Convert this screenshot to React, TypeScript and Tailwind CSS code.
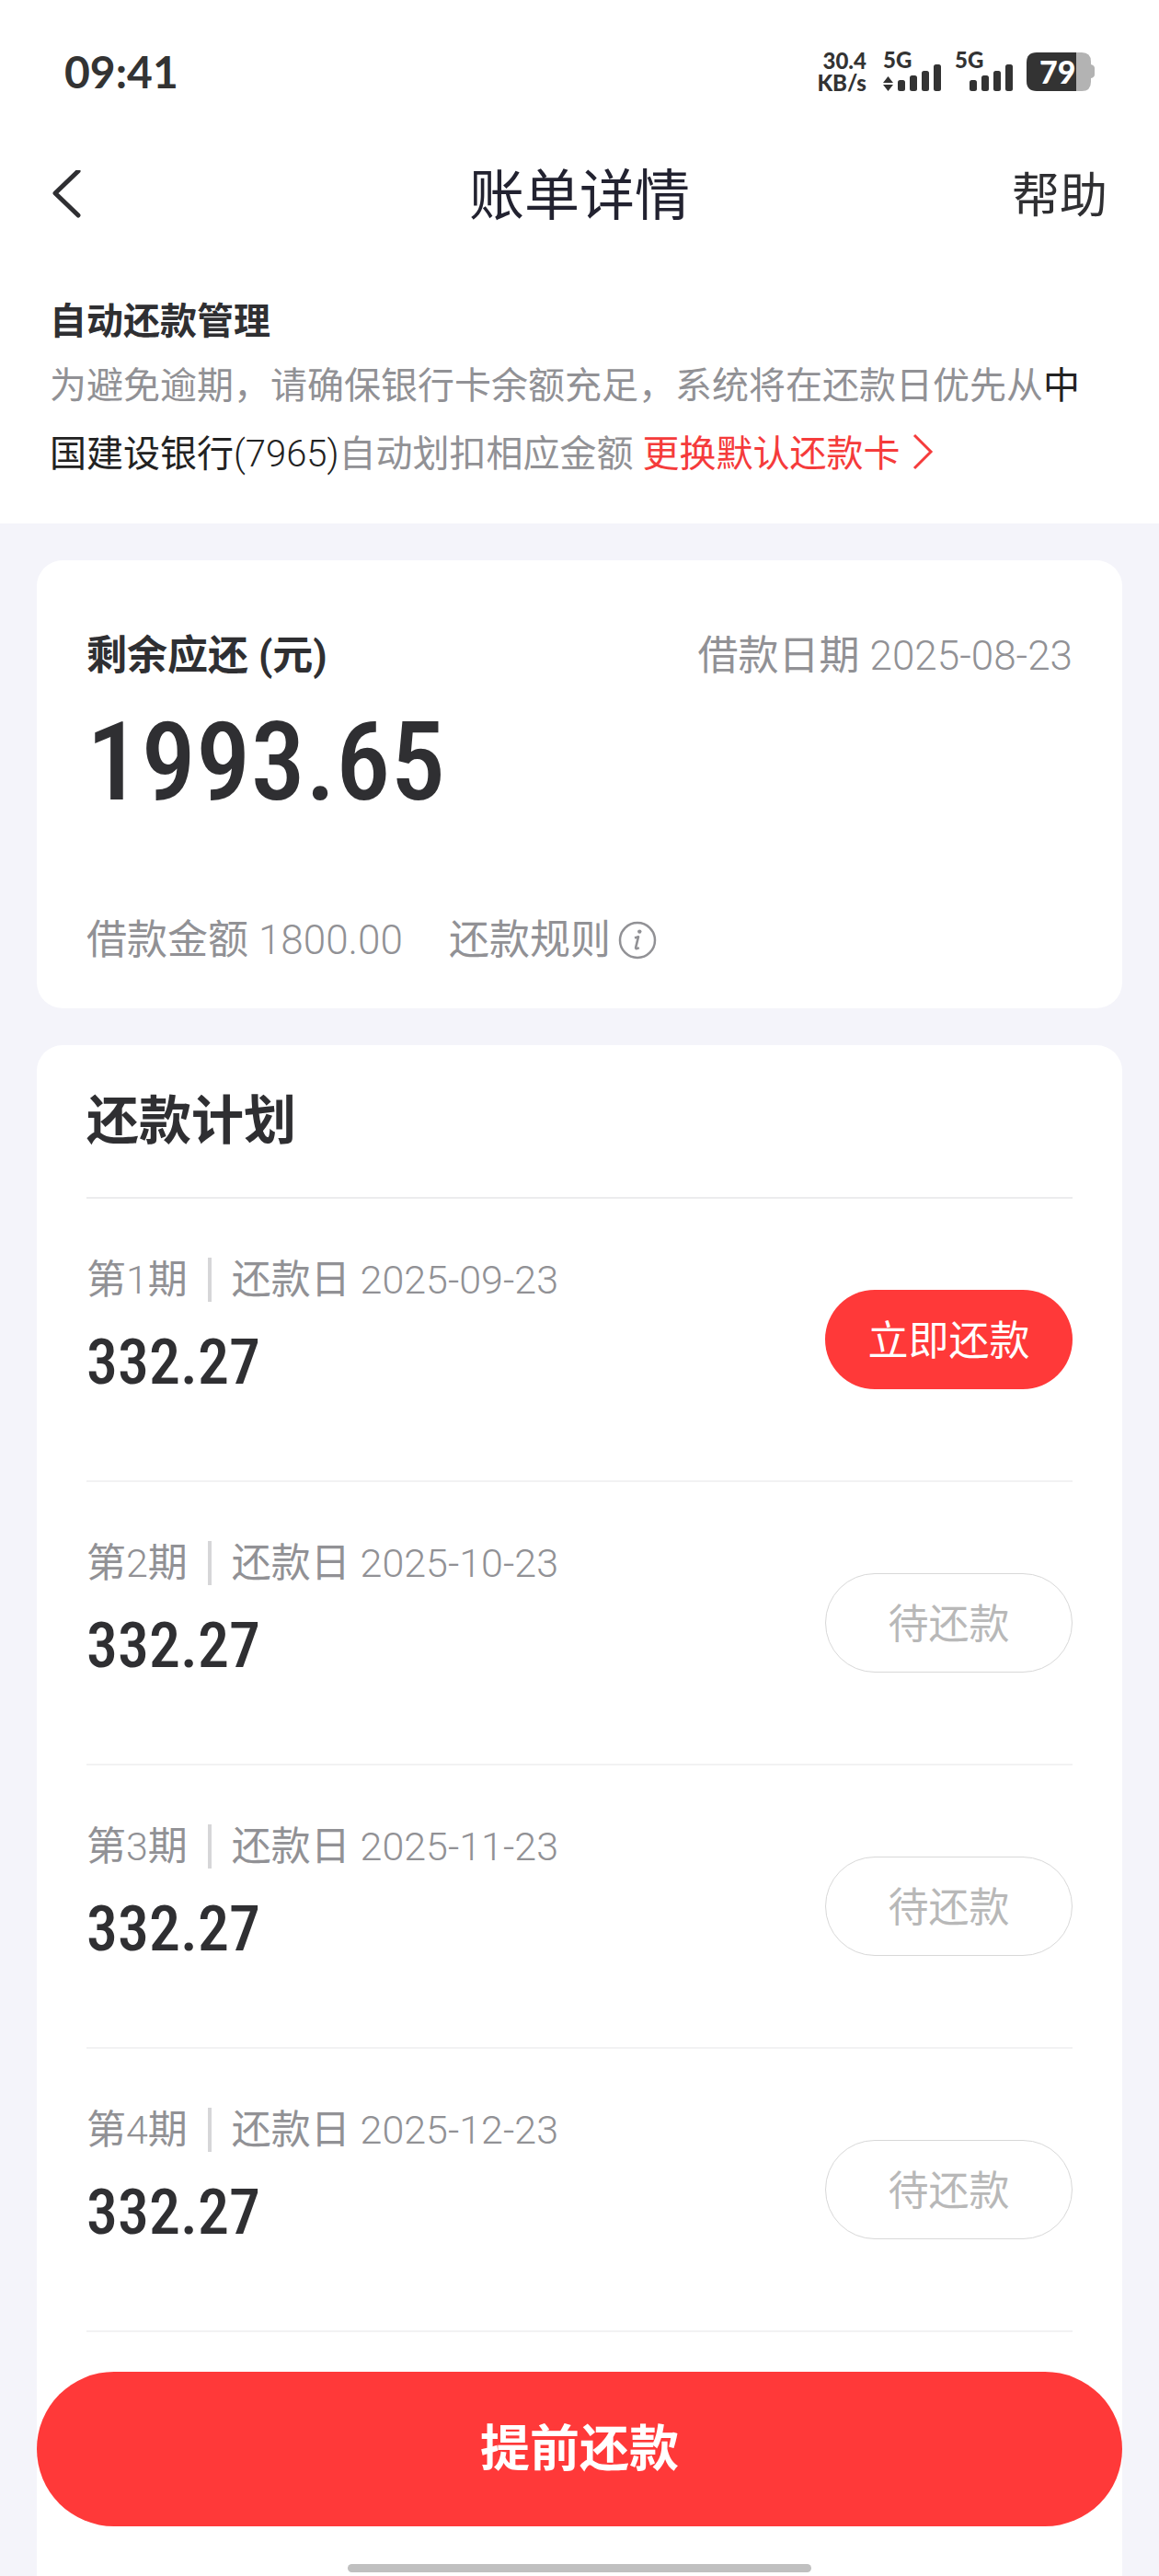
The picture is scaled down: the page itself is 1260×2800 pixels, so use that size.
import React from 'react';

interface Installment {
    period: number;
    date: string;
    amount: string;
    due: boolean;
}

const installments: Installment[] = [
    { period: 1, date: '2025-09-23', amount: '332.27', due: true },
    { period: 2, date: '2025-10-23', amount: '332.27', due: false },
    { period: 3, date: '2025-11-23', amount: '332.27', due: false },
    { period: 4, date: '2025-12-23', amount: '332.27', due: false }
];

const Signal: React.FC<{ arrows?: boolean }> = ({ arrows = false }) => (
    <div className="relative h-[42px] w-16">
        <span className="absolute left-0 top-0 text-2xl leading-4 font-black">5G</span>
        <svg className="block" width="64" height="42" viewBox="0 0 64 42" fill="currentColor" aria-hidden="true">
            {arrows && <path d="M5.5 26l5.5 7H0zM5.5 42L0 35h11z" />}
            <rect x="16" y="30" width="8" height="12" rx="2.5" />
            <rect x="29" y="25" width="8" height="17" rx="2.5" />
            <rect x="42" y="20" width="8" height="22" rx="2.5" />
            <rect x="55" y="13" width="8" height="29" rx="2.5" />
        </svg>
    </div>
);

const Battery: React.FC = () => (
    <div className="relative h-[42px] w-[74px]">
        <svg className="block" width="74" height="42" viewBox="0 0 74 42" aria-hidden="true">
            <path d="M54 0h6q10 0 10 10v3q4 1 4 4v7q0 3-4 4v4q0 10-10 10h-6z" fill="#b3b3b3" />
            <path d="M11 0h43v42H11Q0 42 0 31V11Q0 0 11 0z" fill="#333333" />
        </svg>
        <span className="absolute left-3.5 top-0 text-[34px] leading-[42px] font-black text-white">79</span>
    </div>
);

const StatusBar: React.FC = () => (
    <div className="flex h-[156px] items-center justify-between px-[70px] font-['Lato',sans-serif] text-[#333333]">
        <span className="text-5xl font-bold">09:41</span>
        <div className="flex items-center gap-[14px]">
            <p className="mr-1 text-right text-2xl leading-6 font-black">
                30.4
                <br />
                KB/s
            </p>
            <Signal arrows />
            <Signal />
            <Battery />
        </div>
    </div>
);

const InfoIcon: React.FC = () => (
    <svg width="42" height="42" viewBox="0 0 42 42" fill="none" stroke="currentColor" aria-hidden="true">
        <circle cx="21" cy="21" r="19" strokeWidth="2.5" />
        <path d="M18 18.5l4-1.2-2.8 11.5q-.5 2.6 3.6.4" strokeWidth="2.6" strokeLinejoin="round" />
        <circle cx="23.3" cy="11.6" r="2.2" fill="currentColor" stroke="none" />
    </svg>
);

const InstallmentRow: React.FC<{ item: Installment }> = ({ item }) => (
    <li className="flex h-[308px] items-start justify-between border-b-2 border-[#f2f2f3]">
        <div className="pt-[58px]">
            <div className="flex items-center text-[43px] leading-[60px] text-[#919195]">
                <span>
                    第<span className="font-light">{item.period}</span>期
                </span>
                <span className="mx-[22px] h-12 w-1 bg-[#d6d6d8]"></span>
                <span>还款日&nbsp;</span>
                <span className="font-light">{item.date}</span>
            </div>
            <p className="mt-6 font-['Roboto_Condensed','Roboto',sans-serif] text-[68px] leading-[72px] font-medium">{item.amount}</p>
        </div>
        {item.due ? (
            <button className="h-[108px] w-[269px] self-center rounded-full bg-[#ff3939] pt-1 text-[44px] text-white">立即还款</button>
        ) : (
            <button className="h-[108px] w-[269px] self-center rounded-full border border-[#d8d8d8] pt-1 text-[44px] text-[#b8b8b8]">待还款</button>
        )}
    </li>
);

const App: React.FC = () => {
    return (
        <div className="flex min-h-screen flex-col bg-[#f4f4fa] font-['Roboto','Noto_Sans_CJK_SC',sans-serif] text-[#2f2f32]">
            <header className="bg-white">
                <StatusBar />
                <nav className="grid h-[112px] grid-cols-3 items-center px-14 pt-1">
                    <button className="justify-self-start" aria-label="返回">
                        <svg width="32" height="58" viewBox="0 4 32 58" fill="none" stroke="currentColor" strokeWidth="5" strokeLinecap="round" strokeLinejoin="round">
                            <path d="M29 5L4 29l25 24" />
                        </svg>
                    </button>
                    <h1 className="text-center text-6xl text-[#222230]">账单详情</h1>
                    <button className="justify-self-end text-[52px]">帮助</button>
                </nav>
                <section className="px-[54px] pt-[52px] pb-[38px] text-[40px]">
                    <h2 className="leading-[60px] font-bold">自动还款管理</h2>
                    <p className="mt-[3px] leading-[74px] text-[#919195]">
                        <span>为避免逾期，请确保银行卡余额充足，系统将在还款日优先从</span>
                        <span className="text-[#222222]">中</span>
                        <span className="text-[#222222]">国建设银行</span>
                        <span className="font-light text-[#222222]">(7965)</span>
                        <span>自动划扣相应金额</span>{' '}
                        <a href="#card" className="text-[#f53b3b]">
                            更换默认还款卡
                            <svg className="ml-3 inline-block align-[-4px]" width="24" height="40" viewBox="0 0 24 40" fill="none" stroke="currentColor" strokeWidth="3">
                                <path d="M3 2l18 18L3 38" />
                            </svg>
                        </a>
                    </p>
                </section>
            </header>

            <main className="flex flex-1 flex-col gap-10 px-10 pt-10">
                {/* 剩余应还 */}
                <section className="rounded-[28px] bg-white px-[54px] pt-[74px] pb-11 text-[44px] leading-[60px]">
                    <div className="flex justify-between">
                        <h2 className="font-bold">剩余应还 (元)</h2>
                        <span className="text-[#919195]">
                            借款日期 <span className="font-light">2025-08-23</span>
                        </span>
                    </div>
                    <p className="mt-9 font-['Roboto_Condensed','Roboto',sans-serif] text-[119px] leading-[100px] font-medium">1993.65</p>
                    <div className="mt-[113px] flex items-center gap-[50px] text-[#919195]">
                        <span>
                            借款金额 <span className="font-light">1800.00</span>
                        </span>
                        <button className="flex items-center gap-2">
                            还款规则
                            <InfoIcon />
                        </button>
                    </div>
                </section>

                {/* 还款计划 */}
                <section className="flex flex-1 flex-col rounded-t-[28px] bg-white">
                    <div className="px-[54px]">
                        <h2 className="border-b-2 border-[#ececee] pt-[43px] pb-[42px] text-[57px] leading-[80px] font-bold">还款计划</h2>
                        <ul>
                            {installments.map((item) => (
                                <InstallmentRow key={item.period} item={item} />
                            ))}
                        </ul>
                    </div>
                    <button className="mt-[43px] h-[168px] rounded-full bg-[#ff3939] text-[54px] font-bold text-white">提前还款</button>
                    <div className="mx-auto mt-auto mb-1 h-[9px] w-[504px] rounded-full bg-[#c0c0c0]"></div>
                </section>
            </main>
        </div>
    );
};

export default App;
